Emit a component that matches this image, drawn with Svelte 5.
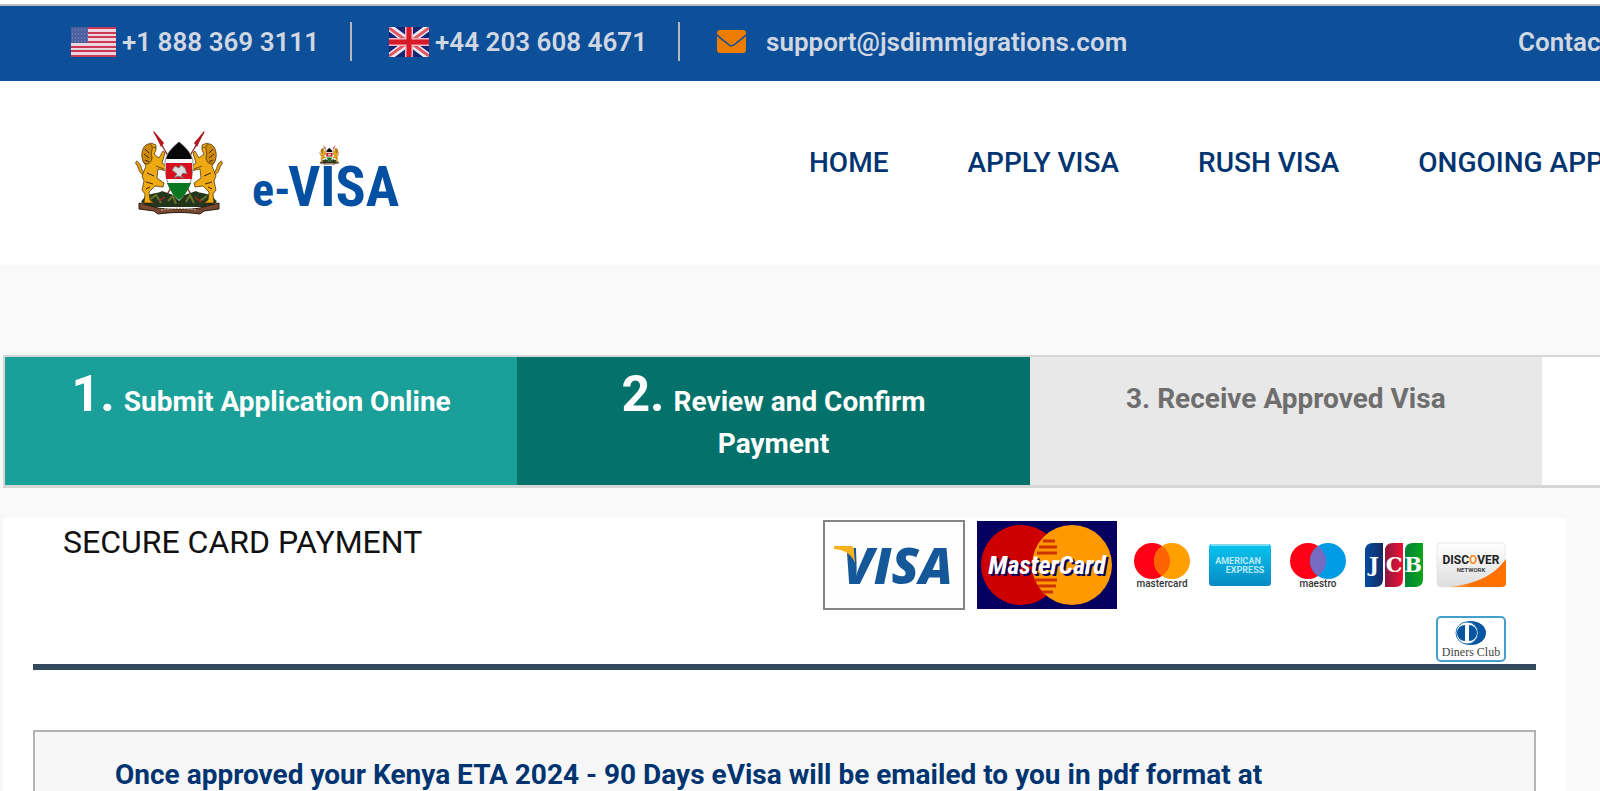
<script>
  const phones = [
    { flag: "us", label: "+1 888 369 3111", href: "tel:+18883693111" },
    { flag: "uk", label: "+44 203 608 4671", href: "tel:+442036084671" },
  ];

  const email = "support@jsdimmigrations.com";

  const menu = ["HOME", "APPLY VISA", "RUSH VISA", "ONGOING APPLICATION"];

  const steps = [
    { number: "1.", title: "Submit Application Online", state: "done" },
    { number: "2.", title: "Review and Confirm Payment", state: "current" },
    { number: "3.", title: "Receive Approved Visa", state: "next" },
  ];
</script>

{#snippet lion()}
  <g stroke="#3a2607" stroke-width=".7">
    <path d="M9 46C4 43 5 38 2 35C1 32 3 31 5 34C8 38 7 42 11 44" fill="#e9a10e" />
    <path
      d="M13 17L17 14L22 16L22 21L20 25L25 29L29 22L31 24L28 34L34 38L33 42L24 40L23 49L30 54L29 58L21 57L15 63L16 71L20 74L10 74L11 65L8 61L10 52L8 47L12 37L9 32L9 25Z"
      fill="#efa912"
    />
    <path d="M10 18C13 14 17 14 18 17C19 21 16 24 18 28C18 33 14 37 10 34C7 29 7 23 10 18Z" fill="#d08a0b" />
    <path d="M11 20L15 24M10 25L15 29M11 31L15 33M13 44L20 47M12 53L19 55M12 60L16 58" fill="none" stroke-width="1" />
    <path d="M19 18L22 19M22 37L30 40" fill="none" />
  </g>
{/snippet}

{#snippet emblem()}
  <g>
    <path d="M20 3L62 74M70 3L28 74" stroke="#8d2b26" stroke-width="1.4" />
    <path d="M19 1L30 14L27 18Z M71 1L60 14L63 18Z" fill="#b5151c" />
    <path d="M7 73C14 62 22 66 28 62L45 68L62 62C68 66 76 62 83 73L76 78L14 78Z" fill="#23361c" />
    <path d="M15 71L22 66L27 74M34 72L39 67L42 75M52 73L56 66L60 74M66 72L73 67" fill="none" stroke="#67752a" stroke-width="2" />
    <path d="M25 72L31 68M61 68L67 73" stroke="#8b2920" stroke-width="2" />
    {@render lion()}
    <g transform="translate(90 0) scale(-1 1)">{@render lion()}</g>
    <path d="M45 13C51 18 57 23 59 32C60 49 54 63 45 72C36 63 30 49 31 32C33 23 39 18 45 13Z" fill="#f7f7f7" stroke="#777" stroke-width=".8" />
    <path d="M45 13C51 18 56 23 58 30L32 30C34 23 39 18 45 13Z" fill="#080808" />
    <path d="M32 34H58V50H32Z" fill="#d80f1d" />
    <path d="M33 54H57C54 62 50 67 45 71C40 67 36 62 33 54Z" fill="#087720" />
    <path d="M40 49L43 45L38 41L41 37L45 39L47 36L51 39L53 45L49 44L47 47L50 49L44 47Z" fill="#ddd" stroke="#777" stroke-width=".8" />
    <path d="M5 74L17 77L24 79C37 81 53 81 66 79L73 77L85 74V80L70 82L66 85C52 83 38 83 24 85L20 82L5 80Z" fill="#76482f" stroke="#2c1b13" />
    <path d="M27 81C39 79 51 79 63 81" fill="none" stroke="#c19b80" stroke-width="1.4" stroke-dasharray="2 1" />
  </g>
{/snippet}

{#snippet flagIcon(name)}
  {#if name === "us"}
    <svg class="flag" width="45" height="30" viewBox="0 0 45 30" aria-hidden="true">
      <path d="M0 0H45V30H0Z" fill="#eed5dd" />
      <path
        d="M0 1H45M0 6H45M0 10H45M0 15H45M0 20H45M0 24H45M0 29H45"
        stroke="#c93855"
        stroke-width="2"
      />
      <path d="M0 0H17V16H0Z" fill="#4c60a0" />
      <path d="M1 3H17M1 7H17M1 11H17M1 14H17" stroke="#8794bf" stroke-width="1" stroke-dasharray="1 2" />
    </svg>
  {:else}
    <svg class="flag" width="40" height="30" viewBox="0 0 40 30" aria-hidden="true">
      <path d="M0 0H40V30H0Z" fill="#142576" />
      <path d="M0 0L40 30M40 0L0 30" stroke="#e7edf6" stroke-width="7" />
      <path d="M0 1L18 14M40 1L22 14M0 29L18 16M40 29L22 16" stroke="#e35561" stroke-width="3" />
      <path d="M20 0V30M0 15H40" stroke="#f2b9c4" stroke-width="8" />
      <path d="M20 0V30M0 15H40" stroke="#d71928" stroke-width="5" />
    </svg>
  {/if}
{/snippet}

<div class="page">
  <div class="topbar">
    {#each phones as phone}
      <a class="contact" href={phone.href}>
        {@render flagIcon(phone.flag)}
        {phone.label}
      </a>
      <span class="divider"></span>
    {/each}
    <a class="contact mail" href="mailto:{email}">
      <svg width="29" height="23" viewBox="0 0 29 23" aria-hidden="true">
        <path d="M3 0H26Q29 0 29 3V4C25 8 20 11 17 14Q14.500 16 12 14C9 11 4 8 0 4V3Q0 0 3 0Z" fill="#ee7c00" />
        <path d="M0 6C4 10 8 12 11 15Q14.500 18 18 15C21 12 25 10 29 6V20Q29 23 26 23H3Q0 23 0 20Z" fill="#ee7c00" />
      </svg>
      {email}
    </a>
    <a class="contact-us" href="#contact">Contact Us</a>
  </div>

  <header class="header">
    <a class="logo" href="#home" aria-label="e-VISA home">
      <svg width="272" height="88" viewBox="0 0 272 88">
        {@render emblem()}
        <g class="logo-text">
          <text class="logo-small" x="118" y="77">e-</text>
          <text class="logo-large" x="154" y="77">VISA</text>
        </g>
        <g transform="translate(185 16) scale(.23)">{@render emblem()}</g>
      </svg>
    </a>
    <nav class="menu">
      {#each menu as item}
        <a href="#{item.toLowerCase().replace(' ', '-')}">{item}</a>
      {/each}
    </nav>
  </header>

  <ol class="steps">
    {#each steps as step}
      <li class="step {step.state}">
        <span class="number">{step.number}</span>
        {step.title}
      </li>
    {/each}
  </ol>

  <main class="panel">
    <div class="panel-head">
      <h1>SECURE CARD PAYMENT</h1>
      <div class="cards">
        <svg width="142" height="90" viewBox="0 0 142 90" role="img" aria-label="Visa">
          <rect x="1" y="1" width="140" height="88" fill="#fefefe" stroke="#858585" stroke-width="2" />
          <text class="visa" x="20" y="64">VISA</text>
          <path d="M11 26H28Q31 26 31 31L32 43Q27 30 11 29Z" fill="#f8b21d" />
        </svg>

        <svg width="140" height="90" viewBox="0 0 140 90" role="img" aria-label="MasterCard">
          <path d="M0 1H140V89H0Z" fill="#05005f" />
          <circle cx="44" cy="45" r="40" fill="#c00" />
          <circle cx="95" cy="45" r="40" fill="#f90" />
          <path d="M66 21H78M62 27H80M60 33H80M58 60H80M61 66H79M65 72H76" stroke="#c30" stroke-width="3" />
          <text class="master shade" x="72" y="56">MasterCard</text>
          <text class="master" x="70" y="54">MasterCard</text>
        </svg>

        <svg width="68" height="46" viewBox="0 0 68 46" role="img" aria-label="mastercard">
          <circle cx="23" cy="19" r="18" fill="#ff0016" />
          <circle cx="43" cy="19" r="18" fill="#ff9f00" />
          <path d="M33 4A18 18 0 0 1 33 34A18 18 0 0 1 33 4Z" fill="#ff6200" />
          <text class="brand" x="33" y="45">mastercard</text>
        </svg>

        <svg width="62" height="42" viewBox="0 0 62 42" role="img" aria-label="American Express">
          <defs>
            <linearGradient id="amex" x2="0" y2="1">
              <stop stop-color="#09c4ed" />
              <stop offset="1" stop-color="#078bc5" />
            </linearGradient>
          </defs>
          <rect width="62" height="42" rx="3" fill="url(#amex)" />
          <path d="M2 1H60" stroke="#7bdcf2" stroke-width="2" />
          <text class="amex" x="29" y="20">AMERICAN</text>
          <text class="amex" x="36" y="29">EXPRESS</text>
        </svg>

        <svg width="70" height="46" viewBox="0 0 70 46" role="img" aria-label="maestro">
          <circle cx="25" cy="19" r="18" fill="#ff0016" />
          <circle cx="45" cy="19" r="18" fill="#009be5" />
          <path d="M35 4A18 18 0 0 1 35 34A18 18 0 0 1 35 4Z" fill="#766bc2" />
          <text class="brand" x="35" y="45">maestro</text>
        </svg>

        <svg width="59" height="46" viewBox="0 0 59 46" role="img" aria-label="JCB">
          <defs>
            <linearGradient id="jcb-blue"><stop stop-color="#064b9e" /><stop offset="1" stop-color="#132b67" /></linearGradient>
            <linearGradient id="jcb-red"><stop stop-color="#8e163f" /><stop offset="1" stop-color="#ed1235" /></linearGradient>
            <linearGradient id="jcb-green"><stop stop-color="#008238" /><stop offset="1" stop-color="#0ca51b" /></linearGradient>
          </defs>
          <path d="M8 1H18V37Q18 45 10 45H0V9Q0 1 8 1Z" fill="url(#jcb-blue)" />
          <path d="M28 1H38V37Q38 45 30 45H20V9Q20 1 28 1Z" fill="url(#jcb-red)" />
          <path d="M48 1H58V37Q58 45 50 45H40V9Q40 1 48 1Z" fill="url(#jcb-green)" />
          <text class="jcb" x="9" y="30">J</text>
          <text class="jcb" x="29" y="30">C</text>
          <text class="jcb" x="48" y="30">B</text>
        </svg>

        <svg width="70" height="46" viewBox="0 0 70 46" role="img" aria-label="Discover">
          <defs>
            <linearGradient id="disc" x2="0" y2="1"><stop stop-color="#fff" /><stop offset="1" stop-color="#ddd" /></linearGradient>
            <linearGradient id="disc-orange"><stop stop-color="#ffb37a" /><stop offset=".4" stop-color="#ff7100" /></linearGradient>
          </defs>
          <rect x="1" y="1" width="68" height="44" rx="4" fill="url(#disc)" stroke="#e8e8e8" />
          <path d="M12 45C41 42 57 34 70 17V41Q70 45 66 45Z" fill="url(#disc-orange)" />
          <text class="discover" x="35" y="22">DISC<tspan fill="#f78d25">O</tspan>VER</text>
          <text class="network" x="35" y="30">NETWORK</text>
        </svg>

        <svg width="70" height="46" viewBox="0 0 70 46" role="img" aria-label="Diners Club">
          <rect x="1" y="1" width="68" height="44" rx="4" fill="#fff" stroke="#459fce" stroke-width="2" />
          <ellipse cx="35" cy="17" rx="15" ry="12" fill="#0755a0" />
          <circle cx="31" cy="17" r="11" fill="#fff" stroke="#2d78b5" stroke-width="1" />
          <path d="M29 9A8 8 0 0 0 29 25ZM33 9A8 8 0 0 1 33 25Z" fill="#0755a0" />
          <text class="diners" x="35" y="40">Diners Club</text>
        </svg>
      </div>
    </div>

    <div class="notice">
      <p>Once approved your Kenya ETA 2024 - 90 Days eVisa will be emailed to you in pdf format at</p>
    </div>
  </main>
</div>

<style>
  :global(body) {
    margin: 0;
    background: #f9f9f9;
  }

  .page {
    display: flex;
    flex-direction: column;
    min-height: 100vh;
    overflow: hidden;
    font-family: Roboto, sans-serif;
    box-sizing: border-box;
    border-top: 4px solid #fff;
  }

  a {
    color: inherit;
    text-decoration: none;
  }

  svg {
    display: block;
    flex-shrink: 0;
  }

  .topbar {
    display: flex;
    align-items: center;
    box-sizing: border-box;
    height: 77px;
    padding: 0 0 4px 71px;
    border-top: 2px solid #b5bdbf;
    background: #0d4f99;
    color: #d0d7e3;
    font-size: 26px;
    font-weight: 600;
    white-space: nowrap;
  }

  .contact {
    display: flex;
    align-items: center;
    gap: 6px;
  }

  .contact.mail {
    gap: 20px;
  }

  .divider {
    flex-shrink: 0;
    width: 2px;
    height: 39px;
    margin: 0 37px 0 31px;
    background: #b4b7bb;
  }

  .contact-us {
    width: 82px;
    margin-left: auto;
  }

  .header {
    display: flex;
    justify-content: space-between;
    box-sizing: border-box;
    height: 184px;
    padding: 48px 0 0 134px;
    background: #fff;
  }

  .logo-text {
    fill: #0350a2;
    font-family: "Liberation Sans Narrow", "Roboto Condensed", Roboto, sans-serif;
    font-weight: 700;
  }

  .logo-small {
    font-size: 46px;
  }

  .logo-large {
    font-size: 56px;
  }

  .menu {
    display: flex;
    gap: 79px;
    width: 791px;
    padding-top: 17px;
    color: #003471;
    font-size: 28px;
    font-weight: 500;
    line-height: 34px;
    white-space: nowrap;
  }

  .steps {
    display: grid;
    grid-template-columns: repeat(3, 1fr) 58px;
    margin: 90px 0 30px 3px;
    padding: 0;
    border: 2px solid #d5d7d6;
    border-right: 0;
    border-bottom-width: 3px;
    background: #fff;
    list-style: none;
  }

  .step {
    padding: 16px 50px 20px;
    font-size: 28px;
    font-weight: 700;
    line-height: 42px;
    text-align: center;
  }

  .number {
    margin-right: 2px;
    font-size: 50px;
  }

  .done {
    background: #1aa098;
    color: #fff;
  }

  .current {
    background: #04716a;
    color: #fff;
  }

  .next {
    background: #e8e8e8;
    color: #6e6e6e;
    line-height: 52px;
  }

  .next .number {
    margin-right: 0;
    font-size: inherit;
  }

  .panel {
    display: flex;
    flex: 1;
    flex-direction: column;
    margin: 0 34px 0 3px;
    padding: 0 30px;
    background: #fff;
  }

  .panel-head {
    display: flex;
    justify-content: space-between;
    padding: 2px 30px;
    border-bottom: 6px solid #34495e;
  }

  h1 {
    margin: 2px 0 0;
    color: #111;
    font-size: 32px;
    font-weight: 400;
    line-height: 40px;
  }

  .cards {
    display: flex;
    flex-wrap: wrap;
    align-items: center;
    justify-content: flex-end;
    gap: 6px 12px;
    width: 50%;
  }

  .cards text {
    text-anchor: middle;
    font-weight: 700;
  }

  .cards .visa {
    fill: #145899;
    font-family: "Open Sans", sans-serif;
    font-size: 50px;
    font-style: italic;
    font-weight: 800;
    text-anchor: start;
  }

  .cards .master {
    fill: #fff;
    font-family: "Roboto Condensed", Roboto, sans-serif;
    font-size: 26px;
    font-style: italic;
  }

  .cards .shade {
    fill: #05005f;
  }

  .cards .brand {
    fill: #333;
    font-size: 10px;
    font-weight: 500;
  }

  .cards .amex {
    fill: #b8eafa;
    font-size: 9px;
  }

  .cards .jcb {
    fill: #fff;
    font-family: "DejaVu Serif", serif;
    font-size: 21px;
  }

  .cards .discover {
    fill: #222;
    font-size: 12px;
  }

  .cards .network {
    fill: #444;
    font-size: 6px;
  }

  .cards .diners {
    fill: #444;
    font-family: "Liberation Serif", serif;
    font-size: 12px;
    font-weight: 400;
  }

  .notice {
    flex: 1;
    margin-top: 60px;
    padding: 26px 80px 0;
    border: 2px solid #b4b4b4;
    border-bottom: 0;
    background: #f7f7f7;
  }

  .notice p {
    margin: 0;
    color: #003471;
    font-size: 28px;
    font-weight: 700;
    line-height: 34px;
  }
</style>
